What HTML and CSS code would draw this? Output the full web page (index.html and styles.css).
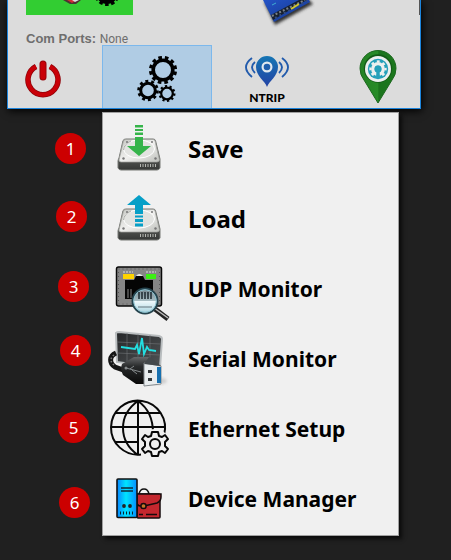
FILE: index.html
```html
<!DOCTYPE html>
<html lang="en">
<head>
<meta charset="utf-8">
<title>Device menu</title>
<link rel="stylesheet" href="styles.css">
</head>
<body>
<svg width="0" height="0" class="defs" aria-hidden="true">
  <defs>
    <linearGradient id="disk-top" x1="0" y1="0" x2="1" y2="1"><stop offset="0" stop-color="#c4c6c1"/><stop offset=".5" stop-color="#f0f0ee"/><stop offset="1" stop-color="#bdbfba"/></linearGradient>
    <linearGradient id="disk-front" x1="0" y1="0" x2="0" y2="1"><stop offset="0" stop-color="#858783"/><stop offset="1" stop-color="#353735"/></linearGradient>
    <symbol id="disk" viewBox="0 0 60 60">
      <path d="M8 42 Q8 41 9 39 L13 21.500 Q14 20 16 20 H43 Q45 20 45.500 21.500 L50 40 V49 Q49 51 47 51 H11 Q9 51 8 49Z" fill="url(#disk-front)" stroke="#777975"/>
      <path d="M9 41 L13.500 22 Q14 20.500 16 20.500 H43 Q44.500 20.500 45 22 L49.500 41 Q49 43 47 43 H11 Q9 43 9 41Z" fill="url(#disk-top)" stroke="#a3a5a0" stroke-width=".7"/>
      <ellipse cx="29" cy="30" rx="15.500" ry="9" fill="#e2e3e0" stroke="#fff"/>
      <path d="M13.500 31 Q14 25 21 22" fill="none" stroke="#a9aba6"/>
      <g fill="#777"><circle cx="17" cy="23" r="1"/><circle cx="42" cy="23" r="1"/><circle cx="13.500" cy="39.500" r="1.200"/><circle cx="45.500" cy="39.500" r="1.200"/></g>
      <path d="M30 46.500 H46" stroke="#b5b7b2" stroke-width="3" stroke-dasharray="1 1.500"/>
    </symbol>
    <linearGradient id="board" x1="0" y1="0" x2="1" y2="1"><stop offset="0" stop-color="#2453c6"/><stop offset="1" stop-color="#12358b"/></linearGradient>
    <linearGradient id="ntrip" x1="0" y1="0" x2="0" y2="1"><stop offset="0" stop-color="#1676b4"/><stop offset="1" stop-color="#2342a4"/></linearGradient>
    <linearGradient id="pin" x1="0" y1="0" x2="1" y2="0"><stop offset="0" stop-color="#238224"/><stop offset=".5" stop-color="#278c27"/><stop offset=".52" stop-color="#1b741d"/><stop offset="1" stop-color="#1c781d"/></linearGradient>
    <linearGradient id="tower" x1="0" y1="0" x2="1" y2="0"><stop offset="0" stop-color="#0784ff"/><stop offset=".45" stop-color="#00e5ff"/><stop offset="1" stop-color="#078cff"/></linearGradient>
    <linearGradient id="lens" x1="0" y1="0" x2="0" y2="1"><stop offset="0" stop-color="#71828a"/><stop offset=".48" stop-color="#a8bcc2"/><stop offset=".52" stop-color="#edf7fa"/><stop offset="1" stop-color="#a7d3df"/></linearGradient>
    <linearGradient id="screen" x1="0" y1="0" x2="1" y2="1"><stop offset="0" stop-color="#252729"/><stop offset="1" stop-color="#515456"/></linearGradient>
    <linearGradient id="plug" x1="0" y1="0" x2="0" y2="1"><stop offset="0" stop-color="#66686a"/><stop offset=".35" stop-color="#292b2c"/><stop offset="1" stop-color="#080808"/></linearGradient>
    <filter id="soft"><feGaussianBlur stdDeviation="1.500"/></filter>
  </defs>
</svg>

<main class="app">
  <section class="window">
    <div class="tiles">
      <div class="tile">
        <svg class="tile-art" viewBox="0 0 107 15" aria-hidden="true">
          <path d="M37 0 L44 4 H50 L55 0Z" fill="#4b3433"/><path d="M41 0 L46 3 L51 0Z" fill="#d22c35"/><path d="M46 0 L49 2 L53 0Z" fill="#ddd"/>
          <circle cx="81" cy="-7" r="9" fill="none" stroke="#000" stroke-width="4"/>
          <circle cx="81" cy="-7" r="11.500" fill="none" stroke="#000" stroke-width="3" stroke-dasharray="3.600 2.422" stroke-dashoffset="1.800"/>
        </svg>
      </div>
      <svg class="board" viewBox="0 0 54 28" aria-hidden="true">
        <path d="M3 2 L14 25 L52 4 L48 0Z" fill="#333" filter="url(#soft)"/>
        <path d="M2 0 L13 22 L49 2 L48 0Z" fill="url(#board)"/>
        <path d="M10 15 L38 0 H46 L12 20Z" fill="#17202e"/>
        <path d="M11 16 L44 0" stroke="#79818a" stroke-width="2" stroke-dasharray="2 2"/>
        <path d="M14 18 L46 1" stroke="#334b7c" stroke-width="2" stroke-dasharray="2 3"/>
        <path d="M30 9 L38 4" stroke="#d1c72f" stroke-width="2"/><path d="M11 5 L15 3" stroke="#3eaed2"/>
      </svg>
      <span class="scroll-edge"></span>
    </div>
    <p class="ports"><b>Com Ports:</b> <span>None</span></p>
    <nav class="toolbar" aria-label="Main">
      <button class="tool tool-power" aria-label="Power">
        <svg class="power" viewBox="0 0 36 38" aria-hidden="true">
          <path d="M11 6.500 A15 15 0 1 0 25 6.500" fill="none" stroke="#8f0309" stroke-width="5.500"/>
          <path d="M11 6.500 A15 15 0 1 0 25 6.500" fill="none" stroke="#c90008" stroke-width="4"/>
          <path d="M18 4 V17" stroke="#98030a" stroke-width="7" stroke-linecap="round"/><path d="M18 4 V17" stroke="#c90008" stroke-width="5" stroke-linecap="round"/>
        </svg>
      </button>
      <button class="tool tool-active" aria-label="Settings" aria-expanded="true">
        <svg class="gears" viewBox="0 0 42 46" fill="none" stroke="#000" aria-hidden="true">
          <circle cx="27" cy="14" r="9.800" stroke-width="3.600"/><circle cx="27" cy="14" r="12.300" stroke-width="3.600" stroke-dasharray="3.500 2.940" stroke-dashoffset="-1.500"/>
          <circle cx="12" cy="34.500" r="7.300" stroke-width="3"/><circle cx="12" cy="34.500" r="9.300" stroke-width="3" stroke-dasharray="2.900 2.943"/>
          <circle cx="31" cy="37.500" r="5.800" stroke-width="2.200"/><circle cx="31" cy="37.500" r="7.300" stroke-width="2.400" stroke-dasharray="2.200 2.387"/>
        </svg>
      </button>
      <button class="tool tool-ntrip">
        <svg class="ntrip" viewBox="0 0 44 31" aria-hidden="true">
          <path d="M22 31 C20 25 11 20 11 11 A11 11 0 0 1 33 11 C33 20 24 25 22 31Z" fill="url(#ntrip)"/>
          <circle cx="22" cy="11" r="5.500" fill="#e0e8ef"/><circle cx="22" cy="11" r="3.300" fill="#1f5eac"/>
          <g fill="none" stroke="#225bac" stroke-width="1.900"><path d="M7 2 Q-5 11 7 21M10 6 Q4 11 10 17M37 2 Q49 11 37 21M34 6 Q40 11 34 17"/></g>
        </svg>
        <span class="tool-label">NTRIP</span>
      </button>
      <button class="tool tool-pin" aria-label="Location">
        <svg class="pin" viewBox="0 0 38 54" aria-hidden="true">
          <path d="M19 53 L5 30 Q1 25 1 18.500 A18 18 0 0 1 37 18.500 Q37 25 33 30Z" fill="url(#pin)" stroke="#1d681f"/>
          <circle cx="19" cy="18.500" r="14.200" fill="#135b17"/><circle cx="19" cy="19" r="13" fill="#ecf0ef"/>
          <circle cx="19" cy="19" r="10.200" fill="#24a0ba"/>
          <circle cx="19" cy="19" r="5.200" fill="none" stroke="#ecf0ef" stroke-width="3.400"/>
          <circle cx="19" cy="19" r="7.600" fill="none" stroke="#ecf0ef" stroke-width="2.200" stroke-dasharray="2.900 3.069" stroke-dashoffset="1.450"/>
          <circle cx="19" cy="19" r="3.400" fill="#24a0ba"/>
          <path d="M17.500 20 L17 28 H21 L20.500 20Z" fill="#24a0ba"/>
        </svg>
      </button>
    </nav>
  </section>

  <ul class="menu">
    <li><span class="badge badge-1">1</span><button class="item item-large">
      <svg class="icon" viewBox="0 0 60 60" aria-hidden="true"><use href="#disk"/><path d="M25 6h8v2.500h-8zM25 10h8v2h-8zM25 13.500h8v2.500h-8zM25 18h8v9h8L29 37 17 27h8z" fill="#35b44a"/></svg>Save</button></li>
    <li><span class="badge badge-2">2</span><button class="item item-large">
      <svg class="icon" viewBox="0 0 60 60" aria-hidden="true"><use href="#disk"/><path d="M25 25V16H17L29 6l12 10h-8v9zM25 26.500h8v2h-8zM25 30h8v3h-8zM25 34.500h8v3h-8z" fill="#069fc7"/></svg>Load</button></li>
    <li><span class="badge badge-3">3</span><button class="item">
      <svg class="icon" viewBox="0 0 60 60" aria-hidden="true">
        <rect x="6.500" y="8" width="45" height="39" rx="2" fill="#858585" stroke="#080808" stroke-width="1.500"/>
        <rect x="8.500" y="10" width="41" height="35" fill="none" stroke="#555" stroke-dasharray="1 3"/>
        <path d="M15 40V21H24L26 17H33L35 21H43V40Z" fill="#050505"/><path d="M26 17Q29 13 33 17Z" fill="#e7e7e7"/>
        <path d="M13 13H23M36 13H46" stroke="#ddd" stroke-dasharray="2 1"/><path d="M13 15h11v5H13z" fill="#ffd400"/><path d="M36 15h10v5H36z" fill="#3cef13"/>
        <path d="M18 30V39M21 30V39" stroke="#888"/>
        <path d="M45 50 L58 60" stroke="#222" stroke-width="5"/><path d="M44 49 L58 59" stroke="#bbb" stroke-width="1.500"/>
        <circle cx="35" cy="42" r="12.500" fill="url(#lens)" stroke="#25434d" stroke-width="2"/><circle cx="35" cy="42" r="11.300" fill="none" stroke="#8cc3d1"/>
        <path d="M29 33V40M32 33V40M35 33V40M38 33V40M41 33V40" stroke="#1c292f" stroke-width="1.500"/><path d="M28 48H42" stroke="#65777f"/>
      </svg>UDP Monitor</button></li>
    <li><span class="badge badge-4">4</span><button class="item">
      <svg class="icon" viewBox="0 0 60 60" aria-hidden="true">
        <ellipse cx="44" cy="52" rx="13" ry="4" fill="#aaa" opacity=".5" filter="url(#soft)"/>
        <path d="M6 4 Q7 3 9 3 L49 7 Q52 8 52 10 L50 39 L7 33Z" fill="url(#screen)" stroke="#b9bdbf" stroke-width="2"/>
        <path d="M17 4V34M28 5V36M40 6V38M7 13L51 15M7 24L50 26" stroke="#717477" stroke-width=".6"/>
        <path d="M11 18 L25 20 L27 16 L29 25 L32 9 L34 25 L37 18 L39 21 L46 22" fill="none" stroke="#23dfe1" stroke-width="1.800"/>
        <path d="M6 24 C-1 27 -1 34 5 38 L16 42" fill="none" stroke="#151515" stroke-width="5"/><path d="M4 26 C0 29 0 33 4 36" fill="none" stroke="#777" stroke-width="1.500" stroke-dasharray="1.500 2"/>
        <path d="M12 35 L24 28 H39 L35 34 V55 H26 L13 46 Q10 40 12 35Z" fill="url(#plug)"/>
        <path d="M34 34 L51 37 V55 L34 57Z" fill="#e9edef" stroke="#858b8f"/><path d="M34 35L40 28L51 37Z" fill="#44494c"/><path d="M47 38 L51 38V54L47 54Z" fill="#1670b0"/>
        <path d="M38 41h4v3h-4zM38 49h4v3h-4z" fill="#34393c"/><path d="M16 39 L31 43M20 40 L24 37M22 41 L27 45" stroke="#858a8c" fill="none"/><circle cx="16" cy="39" r="1.500" fill="#858a8c"/>
      </svg>Serial Monitor</button></li>
    <li><span class="badge badge-5">5</span><button class="item">
      <svg class="icon" viewBox="0 0 60 60" fill="none" stroke="#080808" stroke-width="2" aria-hidden="true">
        <path d="M31 55.500 A27 27 0 1 1 54 36M28 2V56M5 14H51M1 28H55M5 43H28M28 2 C8 16 8 42 28 56M28 2 C38 9 43 19 43 34"/>
        <circle cx="45" cy="45" r="15" fill="#f0f0f0" stroke="none"/>
        <circle cx="45" cy="45" r="5"/><path d="M42 33h6l1 4 3 1 3-2 3 4-3 3v4l3 3-3 4-3-2-3 1-1 4h-6l-1-4-3-1-3 2-3-4 3-3v-4l-3-3 3-4 3 2 3-1z" stroke-linejoin="round"/>
      </svg>Ethernet Setup</button></li>
    <li><span class="badge badge-6">6</span><button class="item">
      <svg class="icon" viewBox="0 0 60 60" aria-hidden="true">
        <path d="M29 25Q30 20 34 20Q38 20 39 25" fill="#f5f5f5" stroke="#111" stroke-width="1.500"/>
        <rect x="27" y="25" width="23" height="24" rx="1" fill="#c4272e" stroke="#160b0c" stroke-width="1.500"/><path d="M27 35 Q29 38 34 37 L47 34 Q51 32 51 28V25H27Z" fill="#c4272e" stroke="#160b0c" stroke-width="1.500"/>
        <circle cx="33.500" cy="37" r="2.600" fill="#c57729" stroke="#160b0c" stroke-width="1.500"/><path d="M29 45.500H33M36 45.500H47" stroke="#160b0c" stroke-width="1.500"/>
        <rect x="7" y="10" width="20" height="38.500" rx="1" fill="url(#tower)" stroke="#111" stroke-width="1.600"/><path d="M11 19H23M11 22H23" stroke="#102a38" stroke-width="1.300"/>
        <circle cx="14" cy="37" r="1.900" fill="#222"/><circle cx="20" cy="37" r="1.900" fill="#222"/><path d="M10 44H25" stroke="#09222b" stroke-width="3" stroke-dasharray="1 2"/>
      </svg>Device Manager</button></li>
  </ul>
</main>
</body>
</html>
```
FILE: styles.css
```css
* { box-sizing: border-box; }
body { margin: 0; background: #202020; font-family: "Liberation Sans", sans-serif; }
.defs { position: absolute; }
.app { padding: 0 30px 24px 7px; }
.window { background: #dcdcdc; border: 1px solid #1c84dc; border-top: 0; box-shadow: 1px 2px 8px #000; }
.tiles { display: flex; align-items: flex-start; justify-content: space-between; height: 32px; padding-left: 18px; }
.tile { width: 107px; height: 15px; background: #32cd32; overflow: hidden; }
.tile-art { display: block; width: 100%; }
.board { width: 54px; height: 28px; margin-left: 24px; }
.scroll-edge { width: 1px; height: 15px; background: #555; }
.ports { margin: 0; padding-left: 18px; height: 13px; line-height: 13px; font-size: 13px; color: #6e6e6e; }
.ports span { font-family: Roboto, sans-serif; font-size: 12px; }
.toolbar { display: grid; grid-template-columns: 94fr 110fr 110fr 98fr; height: 63px; }
.tool { display: flex; flex-direction: column; align-items: center; justify-content: center; gap: 3px; min-width: 0; padding: 0; border: 0; background: none; color: #000; }
.tool-power { align-items: flex-start; padding: 4px 0 0 17px; }
.tool-active { background: #b0cce4; border: 1px solid #7cb8ec; border-bottom: 0; padding-top: 4px; }
.tool-ntrip { gap: 5px; padding-top: 6px; }
.tool-pin { align-items: flex-start; padding-left: 37px; }
.tool-label { font: 900 12px/12px Lato, sans-serif; }
.tool svg { display: block; flex: none; }
.power { width: 36px; height: 38px; }
.gears { width: 42px; height: 46px; }
.ntrip { width: 44px; height: 31px; }
.pin { width: 38px; height: 54px; }
.menu { list-style: none; margin: 3px 22px 0 95px; padding: 1px 0; background: #f0f0f0; border: 1px solid #a0a0a0; box-shadow: 3px 3px 4px #0b0b0b; position: relative; }
.menu li { position: relative; }
.item { display: flex; align-items: center; gap: 18px; width: 100%; height: 70px; padding: 0 0 0 7px; border: 0; background: none; color: #000; font: 700 21px/28px "Noto Sans", sans-serif; text-align: left; white-space: nowrap; }
.item-large { font-size: 24px; }
.icon { flex: none; width: 60px; height: 60px; overflow: visible; }
.badge { position: absolute; width: 31px; height: 31px; border-radius: 50%; background: #cc0000; color: #fff; font: 17px/31px "Noto Sans", sans-serif; text-align: center; }
.badge-1 { left: -48px; top: 19px; }
.badge-2 { left: -47px; top: 17px; }
.badge-3 { left: -45px; top: 17px; }
.badge-4 { left: -43px; top: 11px; }
.badge-5 { left: -45px; top: 18px; }
.badge-6 { left: -44px; top: 23px; }
```
